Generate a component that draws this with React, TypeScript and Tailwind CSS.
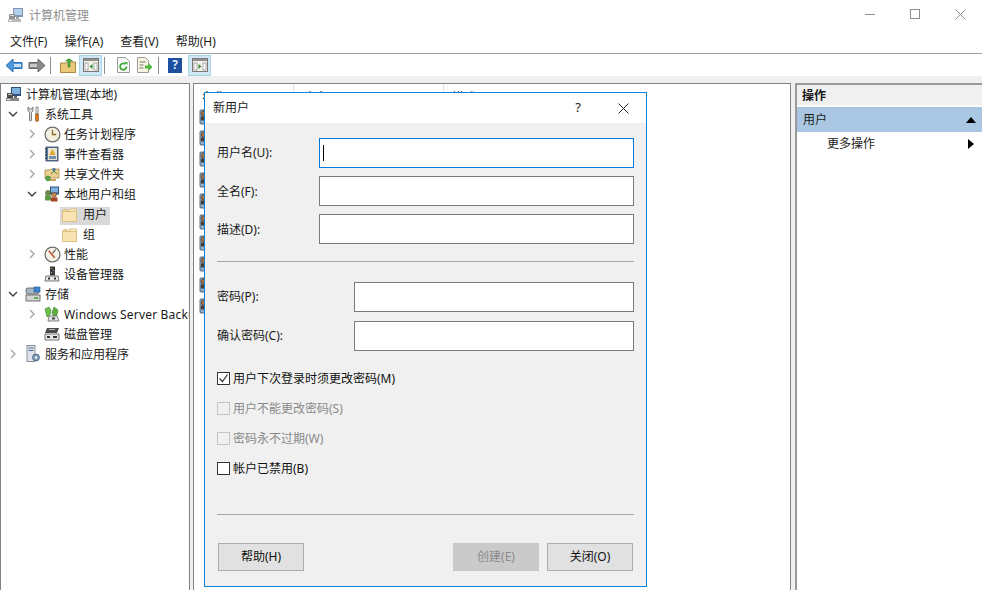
import type { ReactNode } from "react";

const uiFont = "font-['Noto_Sans','Noto_Sans_CJK_SC',sans-serif]";

function ComputerIcon({ small }: { small?: boolean }) {
  return (
    <svg width="16" height="16" viewBox="0 0 16 16" className={small ? "opacity-60" : ""}>
      <rect x="5" y="1" width="10" height="9" fill="#33507c" />
      <rect x="6" y="2" width="8" height="6" fill="#7fb0e0" />
      <rect x="1" y="7" width="6" height="7" fill="#4a4a4a" />
      <rect x="2" y="8" width="4" height="1" fill="#c8c8c8" />
      <rect x="0" y="12" width="13" height="3" fill="#8a8a8a" />
      <rect x="1" y="13" width="3" height="1" fill="#eeeeee" />
      <rect x="8" y="10" width="3" height="2" fill="#6a6a6a" />
    </svg>
  );
}

function ToolsIcon() {
  return (
    <svg width="16" height="16" viewBox="0 0 16 16">
      <path d="M3 1v4l1.5 1.5V14a1 1 0 0 0 2 0V6.500L8 5V1L6.500 3h-2z" fill="#d8d8d8" stroke="#666" strokeWidth="0.8" />
      <path d="M11 1h2v7h-2z" fill="#eeeeee" stroke="#777" strokeWidth="0.8" />
      <path d="M10.500 8h3v6a1.500 1.500 0 0 1-3 0z" fill="#d97a1f" stroke="#8a4b10" strokeWidth="0.6" />
    </svg>
  );
}

function ClockIcon() {
  return (
    <svg width="17" height="17" viewBox="0 0 16 16" className="shrink-0">
      <circle cx="8" cy="8" r="7" fill="#f3eedd" stroke="#6e6e6e" strokeWidth="1.2" />
      <path d="M8 3.500V8h3.500" fill="none" stroke="#8a6a2a" strokeWidth="1.2" />
    </svg>
  );
}

function EventIcon() {
  return (
    <svg width="16" height="16" viewBox="0 0 16 16">
      <rect x="2" y="1" width="12" height="14" fill="#5b7ea8" stroke="#33455f" strokeWidth="0.8" />
      <rect x="4" y="2" width="9" height="12" fill="#e9e3cf" />
      <path d="M8.500 3l3 6h-6z" fill="#e3a52a" />
      <rect x="5" y="10" width="7" height="3" fill="#7792b0" />
      <path d="M1 3h2M1 6h2M1 9h2M1 12h2" stroke="#222" strokeWidth="1" />
    </svg>
  );
}

function SharedFolderIcon() {
  return (
    <svg width="16" height="16" viewBox="0 0 16 16">
      <path d="M1 4h5l1-1h8v9H1z" fill="#e9cf8d" stroke="#a98a45" strokeWidth="0.8" />
      <circle cx="10" cy="3.500" r="1.600" fill="#3f6fa8" />
      <path d="M7 8l3-3 3 3" fill="none" stroke="#5a7f3a" strokeWidth="1" />
      <circle cx="4" cy="12.500" r="2.400" fill="#5aa84a" stroke="#2f6d2a" strokeWidth="0.6" />
      <path d="M6 13h6v2H6z" fill="#c7a25a" />
    </svg>
  );
}

function UsersIcon() {
  return (
    <svg width="16" height="16" viewBox="0 0 16 16">
      <rect x="6" y="0.5" width="9" height="8" fill="#33507c" />
      <rect x="7" y="1.5" width="7" height="5" fill="#7fb0e0" />
      <circle cx="4" cy="7" r="2.500" fill="#6f8f4a" stroke="#3c5426" strokeWidth="0.6" />
      <rect x="1" y="9.500" width="6" height="5" fill="#5a9a44" />
      <circle cx="10" cy="9" r="2.400" fill="#c68a52" stroke="#6a431f" strokeWidth="0.6" />
      <rect x="7" y="11.500" width="6.500" height="4" fill="#a5432a" />
    </svg>
  );
}

function FolderIcon() {
  return (
    <svg width="15" height="14" viewBox="0 0 15 14">
      <path d="M.5 3.500h14v10H.5z" fill="#f7e4b2" stroke="#dcc07e" />
      <path d="M.5 3.500l1.500-2h3l1.500 2z" fill="#f2d996" stroke="#dcc07e" />
      <path d="M7 3.500l1-2.500h6.500v2.500z" fill="#fbeec9" stroke="#dcc07e" />
    </svg>
  );
}

function GaugeIcon() {
  return (
    <svg width="17" height="17" viewBox="0 0 16 16" className="shrink-0">
      <circle cx="8" cy="8" r="7" fill="#f4f1e6" stroke="#6e6e6e" strokeWidth="1.2" />
      <path d="M4.500 4.500L10 11" stroke="#c0502a" strokeWidth="1.400" />
      <path d="M11 3.500L8 7" stroke="#555" strokeWidth="1" />
    </svg>
  );
}

function DeviceIcon() {
  return (
    <svg width="16" height="16" viewBox="0 0 16 16">
      <rect x="6" y="0.5" width="5" height="9" fill="#3a3a3a" />
      <rect x="7" y="2" width="1" height="1" fill="#e0a030" />
      <rect x="9" y="4" width="1" height="1" fill="#58a0e0" />
      <rect x="7" y="6" width="1" height="1" fill="#c0c0c0" />
      <path d="M2 10h12l1 5H1z" fill="#e8e8e8" stroke="#555" strokeWidth="0.8" />
      <rect x="4" y="11.500" width="2" height="2" fill="#333" />
      <rect x="10" y="11.500" width="2" height="2" fill="#333" />
    </svg>
  );
}

function StorageIcon() {
  return (
    <svg width="16" height="16" viewBox="0 0 16 16">
      <rect x="1" y="9" width="14" height="6" fill="#d6d6d6" stroke="#555" strokeWidth="0.8" />
      <rect x="9" y="11" width="4" height="2" fill="#5fae4c" />
      <rect x="1" y="2" width="13" height="6" rx="2" fill="#a7b6c4" stroke="#555" strokeWidth="0.8" />
      <rect x="9" y="1" width="6" height="5" fill="#3c82cf" stroke="#27558a" strokeWidth="0.6" />
    </svg>
  );
}

function BackupIcon() {
  return (
    <svg width="16" height="16" viewBox="0 0 16 16">
      <path d="M1 3l4-2 2 3-1 5-3 2-1-4z" fill="#6bc04a" stroke="#3a7d2a" strokeWidth="0.6" />
      <path d="M10 1l4 3-1 5-3 2-2-4z" fill="#5cb040" stroke="#3a7d2a" strokeWidth="0.6" />
      <path d="M5 10h8l2 5H4z" fill="#e4e4e4" stroke="#555" strokeWidth="0.7" />
      <rect x="8" y="11.500" width="3" height="2" fill="#444" />
    </svg>
  );
}

function DiskIcon() {
  return (
    <svg width="16" height="16" viewBox="0 0 16 16">
      <path d="M3 2h12l-2 5H1z" fill="#4a4a4a" />
      <path d="M5 3.500h6" stroke="#bbbbbb" strokeWidth="1" />
      <path d="M1 8h14v6H1z" fill="#e8e8e8" stroke="#555" strokeWidth="0.8" />
      <rect x="3" y="10" width="3" height="2" fill="#333" />
      <rect x="9" y="10" width="4" height="2" fill="#333" />
    </svg>
  );
}

function ServicesIcon() {
  return (
    <svg width="16" height="18" viewBox="0 0 16 18">
      <rect x="2" y="0.5" width="8" height="16" fill="#dfe4ea" stroke="#6e7a88" strokeWidth="0.8" />
      <rect x="3.500" y="2.500" width="5" height="1" fill="#4d6a90" />
      <rect x="3.500" y="5" width="5" height="1" fill="#4d6a90" />
      <circle cx="11" cy="12.500" r="3.400" fill="#7d9ab8" stroke="#4d6a90" strokeWidth="1" />
      <circle cx="11" cy="12.500" r="1.200" fill="#f4f6f8" />
    </svg>
  );
}

function PersonIcon() {
  return (
    <svg width="10" height="16" viewBox="0 0 10 16" className="block">
      <rect x="1" y="1" width="8" height="14" rx="1" fill="#8fb2d4" stroke="#3b4652" strokeWidth="0.8" />
      <circle cx="5" cy="4.500" r="2.600" fill="#b9763a" stroke="#40291a" strokeWidth="0.7" />
      <rect x="2" y="7.500" width="6" height="4" fill="#4b3b2e" />
    </svg>
  );
}

function Chevron({ open }: { open?: boolean }) {
  return (
    <svg width="10" height="10" viewBox="0 0 10 10" className="shrink-0">
      {open ? (
        <path d="M1 3l4 4 4-4" fill="none" stroke="#404040" strokeWidth="1.400" />
      ) : (
        <path d="M3 1l4 4-4 4" fill="none" stroke="#a6a6a6" strokeWidth="1.400" />
      )}
    </svg>
  );
}

function TreeRow({
  level,
  arrow,
  icon,
  label,
  selected,
}: {
  level: number;
  arrow?: "open" | "closed";
  icon: ReactNode;
  label: ReactNode;
  selected?: boolean;
}) {
  if (level === 3) {
    return (
      <div className="flex h-5 items-start whitespace-nowrap pl-[59px]">
        <div className={`mt-[3px] flex h-[18px] items-center pb-[3px] pl-[2px] pr-[3px] ${selected ? "bg-[#d9d9d9]" : ""}`}>
          <span className="mr-[6px] flex w-[15px] items-center">{icon}</span>
          <span>{label}</span>
        </div>
      </div>
    );
  }
  const indent = ["pl-[5px]", "pl-[7px]", "pl-[26px]"][level];
  return (
    <div className={`flex h-5 items-center whitespace-nowrap ${indent}`}>
      {level > 0 && (
        <span className="mr-[7px] flex w-2.5 justify-center">{arrow && <Chevron open={arrow === "open"} />}</span>
      )}
      <span className="mr-[4px] flex w-4 shrink-0 items-center justify-center">{icon}</span>
      <span className="pt-[2px]">{label}</span>
    </div>
  );
}

function ToolButton({ active, children }: { active?: boolean; children: ReactNode }) {
  return (
    <div className={`flex h-[21px] w-[23px] items-center justify-center ${active ? "border border-[#a8d4ea] bg-[#cfe8f5]" : ""}`}>
      {children}
    </div>
  );
}

function ToolSep({ className }: { className: string }) {
  return <div className={`h-[17px] w-px bg-[#8f8f8f] ${className}`} />;
}

function PanelIcon({ dir }: { dir: "left" | "right" }) {
  return (
    <svg width="16" height="14" viewBox="0 0 16 14">
      <rect x="0.5" y="0.5" width="15" height="13" fill="#f4f1e6" stroke="#7a7a7a" />
      <rect x="1" y="1" width="14" height="2" fill="#8f8f8f" />
      <rect x="2" y="5" width="3" height="7" fill="#ffffff" stroke="#8a8a8a" strokeWidth="0.7" />
      <rect x="11" y="5" width="3" height="7" fill="#ffffff" stroke="#8a8a8a" strokeWidth="0.7" />
      {dir === "left" ? <path d="M9.500 6v5L6.500 8.500z" fill="#2f8f3a" /> : <path d="M6.500 6v5l3-2.500z" fill="#2f8f3a" />}
    </svg>
  );
}

function Field({ label, labelW, focused }: { label: string; labelW: string; focused?: boolean }) {
  return (
    <div className="flex items-center">
      <label className={`shrink-0 text-[12px] ${labelW}`}>{label}</label>
      <div className={`flex h-[30px] flex-1 items-center border bg-white pl-[3px] ${focused ? "border-[#0078d7]" : "border-[#7a7a7a]"}`}>
        {focused && <div className="h-[16px] w-px bg-black" />}
      </div>
    </div>
  );
}

function Check({ label, checked, disabled }: { label: string; checked?: boolean; disabled?: boolean }) {
  return (
    <div className={`flex h-[13px] items-center gap-[3px] text-[12px] ${disabled ? "text-[#8a8a8a]" : "text-[#111]"}`}>
      <div className={`flex h-[13px] w-[13px] shrink-0 items-center justify-center border ${disabled ? "border-[#c4c4c4] bg-[#f0f0f0]" : "border-[#333] bg-white"}`}>
        {checked && (
          <svg width="11" height="11" viewBox="0 0 11 11">
            <path d="M1.500 5.500l3 3 5-7" fill="none" stroke="#333" strokeWidth="1.200" />
          </svg>
        )}
      </div>
      <span>{label}</span>
    </div>
  );
}

function DialogButton({ label, disabled }: { label: string; disabled?: boolean }) {
  return (
    <button
      className={`h-[28px] w-[86px] border text-[12px] ${
        disabled ? "border-[#c8c8c8] bg-[#cacaca] text-[#8a8a8a]" : "border-[#adadad] bg-[#e1e1e1] text-[#111]"
      }`}
    >
      {label}
    </button>
  );
}

export default function App() {
  return (
    <div className={`relative flex h-[590px] w-[982px] flex-col overflow-hidden bg-white text-[12px] text-[#1a1a1a] ${uiFont}`}>
      {/* title bar */}
      <div className="flex h-[30px] items-center pl-2">
        <ComputerIcon small />
        <span className="ml-[5px] pt-[2px] text-[12px] text-[#8f8f8f]">计算机管理</span>
        <div className="ml-auto flex items-center gap-[35px] pb-[2px] pr-[16px]">
          <div className="h-px w-2.5 bg-[#8f8f8f]" />
          <div className="h-2.5 w-2.5 border border-[#8f8f8f]" />
          <svg width="11" height="11" viewBox="0 0 11 11">
            <path d="M.5.5l10 10M10.500.5l-10 10" stroke="#8f8f8f" strokeWidth="1" />
          </svg>
        </div>
      </div>

      {/* menu */}
      <div className="flex h-[24px] items-center gap-[17px] border-b border-[#a0a0a0] pl-[10px] text-[12px]">
        <span>文件(F)</span>
        <span>操作(A)</span>
        <span>查看(V)</span>
        <span>帮助(H)</span>
      </div>

      {/* toolbar */}
      <div className="flex h-[22px] items-center pl-[5px]">
        <svg width="18" height="15" viewBox="0 0 18 15">
          <path d="M8 1v3.500h9v6H8V14L1 7.500z" fill="#4e97dc" stroke="#2a6cb0" />
          <rect x="9" y="6" width="7" height="3" fill="#c7def2" />
        </svg>
        <svg width="18" height="15" viewBox="0 0 18 15" className="ml-[5px]">
          <path d="M10 1v3.500H1v6h9V14l7-6.500z" fill="#8a8a8a" stroke="#666" />
          <rect x="2" y="6" width="7" height="3" fill="#c8c8c8" />
        </svg>
        <ToolSep className="ml-[4px]" />
        <div className="ml-[9px]">
          <svg width="16" height="15" viewBox="0 0 16 15">
            <path d="M.5 5h6l1-1h8v10.500H.5z" fill="#e9c878" stroke="#a98a45" />
            <path d="M8 9V3H5.500L9 .5 12.500 3H10v6z" fill="#4cae3f" stroke="#2f7a28" strokeWidth="0.5" />
          </svg>
        </div>
        <div className="ml-[3px]">
          <ToolButton active>
            <PanelIcon dir="left" />
          </ToolButton>
        </div>
        <ToolSep className="ml-[2px]" />
        <div className="ml-[12px]">
          <svg width="13" height="16" viewBox="0 0 13 16">
            <path d="M.5.5h8l4 4v11H.5z" fill="#fafafa" stroke="#9a9a9a" />
            <path d="M9.500 9.500a3.200 3.200 0 1 1-1-2.300" fill="none" stroke="#3fa83a" strokeWidth="1.800" />
            <path d="M7.500 5h3v3z" fill="#3fa83a" />
          </svg>
        </div>
        <div className="ml-[7px]">
          <svg width="16" height="16" viewBox="0 0 16 16">
            <path d="M.5.5h8l3 3v12H.5z" fill="#f8f4e0" stroke="#9a9a9a" />
            <path d="M2.500 5h6M2.500 8h4M2.500 11h4" stroke="#777" />
            <path d="M8 8.500h3.500V6L15.500 10l-4 4v-2.500H8z" fill="#4cbb3f" />
          </svg>
        </div>
        <ToolSep className="ml-[5px]" />
        <div className="ml-[9px] flex h-[15px] w-[14px] items-center justify-center bg-[#1d4f9e] text-[12px] font-bold leading-none text-[#dce8f5]">?</div>
        <div className="ml-[6px]">
          <ToolButton active>
            <PanelIcon dir="right" />
          </ToolButton>
        </div>
      </div>

      {/* panes */}
      <div className="flex flex-1 gap-[3px] overflow-hidden bg-[#f0f0f0] pt-[7px]">
        <div className="w-[190px] shrink-0 overflow-hidden border-l border-r border-t border-[#828282] bg-white">
          <TreeRow level={0} icon={<ComputerIcon />} label="计算机管理(本地)" />
          <TreeRow level={1} arrow="open" icon={<ToolsIcon />} label="系统工具" />
          <TreeRow level={2} arrow="closed" icon={<ClockIcon />} label="任务计划程序" />
          <TreeRow level={2} arrow="closed" icon={<EventIcon />} label="事件查看器" />
          <TreeRow level={2} arrow="closed" icon={<SharedFolderIcon />} label="共享文件夹" />
          <TreeRow level={2} arrow="open" icon={<UsersIcon />} label="本地用户和组" />
          <TreeRow level={3} icon={<FolderIcon />} label="用户" selected />
          <TreeRow level={3} icon={<FolderIcon />} label="组" />
          <TreeRow level={2} arrow="closed" icon={<GaugeIcon />} label="性能" />
          <TreeRow level={2} icon={<DeviceIcon />} label="设备管理器" />
          <TreeRow level={1} arrow="open" icon={<StorageIcon />} label="存储" />
          <TreeRow level={2} arrow="closed" icon={<BackupIcon />} label={<span className="tracking-[0.2px]">Windows Server Backup</span>} />
          <TreeRow level={2} icon={<DiskIcon />} label="磁盘管理" />
          <TreeRow level={1} arrow="closed" icon={<ServicesIcon />} label="服务和应用程序" />
        </div>

        {/* user list, mostly behind the dialog */}
        <div className="mr-px w-[598px] shrink-0 border border-b-0 border-[#828282] bg-white">
          <div className="flex h-[13px] text-[12px] leading-[27px]">
            <div className="w-[100px] border-r border-[#e0e0e0] pl-2">名称</div>
            <div className="w-[150px] border-r border-[#e0e0e0] pl-[10px]">全名</div>
            <div className="pl-[8px]">描述</div>
          </div>
          <div className="flex flex-col gap-[5px] pl-[5px] pt-[12px]">
            {Array.from({ length: 10 }, (_, i) => (
              <PersonIcon key={i} />
            ))}
          </div>
        </div>

        {/* actions */}
        <div className="flex-1 border-2 border-b-0 border-r-0 border-[#9a9a9a] bg-white">
          <div className="flex h-[20px] items-center bg-[#f0f0f0] pl-[5px] pt-[2px] text-[12px] font-bold">操作</div>
          <div className="mt-[2px] flex h-[25px] items-center bg-[#a9c6e2] pl-[6px] pr-[6px]">
            <span>用户</span>
            <svg width="10" height="6" viewBox="0 0 10 6" className="ml-auto">
              <path d="M5 0l5 6H0z" fill="#000" />
            </svg>
          </div>
          <div className="flex h-[24px] items-center pl-[30px] pr-[8px]">
            <span>更多操作</span>
            <svg width="6" height="10" viewBox="0 0 6 10" className="ml-auto">
              <path d="M0 0l6 5-6 5z" fill="#000" />
            </svg>
          </div>
        </div>
      </div>

      {/* dialog */}
      <div className="absolute left-[204px] top-[92px] flex h-[495px] w-[443px] flex-col border border-[#0a84d8] bg-[#f0f0f0]">
        <div className="flex h-[30px] shrink-0 items-center bg-white pl-2 text-[12px]">
          <span>新用户</span>
          <span className="ml-auto mr-[37px] text-[13px] font-normal">?</span>
          <svg width="11" height="11" viewBox="0 0 11 11" className="mr-[17px]">
            <path d="M.5.5l10 10M10.500.5l-10 10" stroke="#222" strokeWidth="1" />
          </svg>
        </div>
        <div className="flex flex-1 flex-col pl-3 pr-3 pt-[15px]">
          <div className="flex flex-col gap-2">
            <Field label="用户名(U):" labelW="w-[102px]" focused />
            <Field label="全名(F):" labelW="w-[102px] pt-[2px]" />
            <Field label="描述(D):" labelW="w-[102px] pt-[2px]" />
          </div>
          <div className="mt-[17px] h-px bg-[#a8a8a8]" />
          <div className="mt-5 flex flex-col gap-[9px]">
            <Field label="密码(P):" labelW="w-[137px]" />
            <Field label="确认密码(C):" labelW="w-[137px]" />
          </div>
          <div className="mt-[21px] flex flex-col gap-[17px]">
            <Check label="用户下次登录时须更改密码(M)" checked />
            <Check label="用户不能更改密码(S)" disabled />
            <Check label="密码永不过期(W)" disabled />
            <Check label="帐户已禁用(B)" />
          </div>
          <div className="mt-[39px] h-px bg-[#a8a8a8]" />
          <div className="mt-7 flex pl-px pr-px">
            <DialogButton label="帮助(H)" />
            <div className="ml-auto flex gap-2">
              <DialogButton label="创建(E)" disabled />
              <DialogButton label="关闭(O)" />
            </div>
          </div>
        </div>
      </div>
    </div>
  );
}
